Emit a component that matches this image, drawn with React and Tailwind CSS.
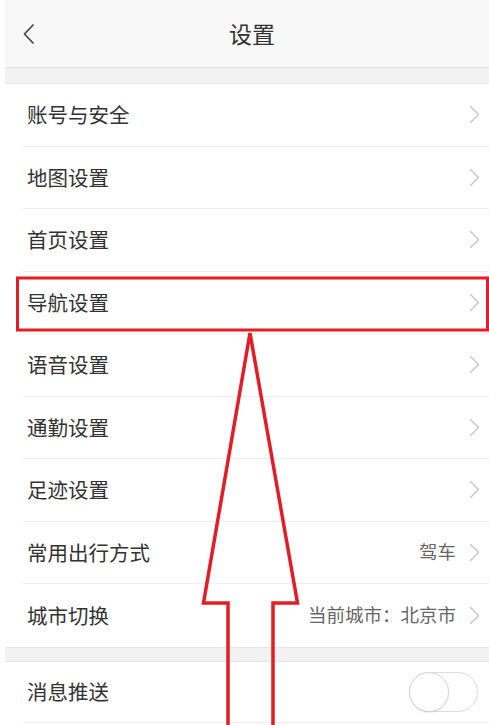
import React, { useState } from 'react';

const font = { fontFamily: '"Noto Sans CJK SC", "Noto Sans", sans-serif' };

const Chevron = () => (
  <svg className="w-[11px] h-[19px] shrink-0" viewBox="0 0 11 19" fill="none">
    <path d="M1.5 1.5l8 8-8 8" stroke="#c2c2c2" strokeWidth="1.2" strokeLinecap="round" strokeLinejoin="round" />
  </svg>
);

const rows = [
  { label: '账号与安全' },
  { label: '地图设置' },
  { label: '首页设置' },
  { label: '导航设置' },
  { label: '语音设置' },
  { label: '通勤设置' },
  { label: '足迹设置' },
  { label: '常用出行方式', value: '驾车' },
  { label: '城市切换', value: '当前城市：北京市', last: true },
];

const Row = ({ label, value, last }) => (
  <div className={`h-[62.5px] ml-[18px] pl-[4px] pr-[9px] flex items-center justify-between ${last ? '' : 'border-b border-[#efefef]'}`}>
    <span className="text-[20.5px] text-[#333]">{label}</span>
    <div className="flex items-center gap-[13px]">
      {value && <span className="text-[18.5px] text-[#666]">{value}</span>}
      <Chevron />
    </div>
  </div>
);

export default function App() {
  const [push, setPush] = useState(false);

  return (
    <div className="relative w-full h-[725px] overflow-hidden bg-white pl-[5px]" style={font}>
      {/* 顶部栏 */}
      <div className="h-[68px] bg-[#f8f8f8] border-b border-[#e2e2e2] flex items-center relative">
        <svg className="absolute left-[17px] w-[14px] h-[22px]" viewBox="0 0 14 22" fill="none">
          <path d="M11 2L2.5 11 11 20" stroke="#444" strokeWidth="1.7" strokeLinecap="round" strokeLinejoin="round" />
        </svg>
        <h1 className="flex-1 text-center text-[23px] text-[#333] pl-[10px]">设置</h1>
      </div>
      <div className="h-[16px] bg-[#f2f2f2] border-b border-[#e6e6e6]" />

      {rows.map((r) => (
        <Row key={r.label} {...r} />
      ))}

      <div className="h-[15px] bg-[#f2f2f2] border-y border-[#e6e6e6]" />

      <div className="h-[61px] ml-[18px] pl-[4px] pr-[11px] flex items-center justify-between border-b border-[#efefef]">
        <span className="text-[20.5px] text-[#333]">消息推送</span>
        <button
          onClick={() => setPush(!push)}
          className={`w-[69px] h-[40px] rounded-full border border-[#dcdcdc] relative ${push ? 'bg-[#4cd964]' : 'bg-white'}`}
        >
          <span className={`absolute top-[-1px] w-[40px] h-[40px] rounded-full bg-white border border-[#d4d4d4] shadow-[0_1px_2px_rgba(0,0,0,0.08)] ${push ? 'left-[28px]' : 'left-[-1px]'}`} />
        </button>
      </div>

      {/* 标注 */}
      <svg className="absolute inset-0 w-full h-full pointer-events-none" viewBox="0 0 489 725" preserveAspectRatio="none">
        <rect x="17.5" y="278" width="470" height="52" fill="none" stroke="#e41c25" strokeWidth="3" />
        <polyline
          points="228,730 228,603 203.5,603 250,333 297.5,603 273,603 273,730"
          fill="none"
          stroke="#e41c25"
          strokeWidth="3.5"
          strokeLinejoin="miter"
        />
      </svg>
    </div>
  );
}
